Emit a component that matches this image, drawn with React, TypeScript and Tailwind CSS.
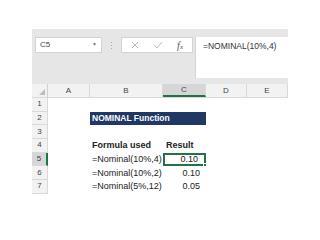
export default function App() {
  const cols = [
    { name: "A", w: "w-[42px]" },
    { name: "B", w: "w-[73px]" },
    { name: "C", w: "w-[43px]" },
    { name: "D", w: "w-[41px]" },
    { name: "E", w: "w-[41px]" },
  ];
  const rows = [
    { n: 1 },
    { n: 2, title: true },
    { n: 3 },
    { n: 4, b: "Formula used", c: "Result", bold: true },
    { n: 5, b: "=Nominal(10%,4)", c: "0.10", selected: true },
    { n: 6, b: "=Nominal(10%,2)", c: "0.10" },
    { n: 7, b: "=Nominal(5%,12)", c: "0.05" },
  ];

  return (
    <div className="w-[320px] h-[240px] bg-white pt-[29px] pl-[32px] font-['Liberation_Sans',sans-serif] text-[#222]">
      <div className="w-[256px]">
        {/* formula bar area */}
        <div className="h-[55px] bg-[#e6e6e6] flex items-start pt-[8px] pl-[3px]">
          <div className="w-[67px] h-[16px] bg-white border border-[#d4d4d4] flex items-center justify-between px-[4px] text-[8px] text-[#444]">
            <span>C5</span>
            <span className="text-[5px] text-[#777]">▼</span>
          </div>
          <div className="w-[19px] h-[16px] flex items-center justify-center">
            <div className="flex flex-col gap-[2px]">
              <span className="w-[1px] h-[1px] bg-[#aaa]" />
              <span className="w-[1px] h-[1px] bg-[#aaa]" />
              <span className="w-[1px] h-[1px] bg-[#aaa]" />
            </div>
          </div>
          <div className="w-[72px] h-[16px] bg-white border border-[#d4d4d4] flex items-center justify-between px-[9px]">
            <svg width="8" height="8" viewBox="0 0 8 8">
              <path d="M1 1 L7 7 M7 1 L1 7" stroke="#bbb" strokeWidth="1" />
            </svg>
            <svg width="10" height="8" viewBox="0 0 10 8">
              <path d="M1 4 L4 7 L9 1" stroke="#bbb" strokeWidth="1" fill="none" />
            </svg>
            <span className="font-['Liberation_Serif',serif] italic text-[10px] text-[#555]">
              f<span className="text-[7px]">x</span>
            </span>
          </div>
          <div className="ml-[2px] flex-1 h-[41px] bg-white border-l border-[#d4d4d4] pl-[7px] pt-[3px] text-[8.5px] text-[#333]">
            =NOMINAL(10%,4)
          </div>
        </div>

        {/* column headers */}
        <div className="flex h-[14px] bg-[#f2f2f2] border-b border-[#d9d9d9] text-[8px] text-[#444]">
          <div className="w-[16px] flex items-end justify-end pr-[2px] pb-[2px] border-r border-[#d0d0d0]">
            <svg width="6" height="6" viewBox="0 0 6 6">
              <path d="M6 0 L6 6 L0 6 Z" fill="#bdbdbd" />
            </svg>
          </div>
          {cols.map((c) => (
            <div
              key={c.name}
              className={`${c.w} flex items-center justify-center border-r border-[#d9d9d9] ${
                c.name === "C" ? "bg-[#d6d6d6] border-b-2 border-b-[#217346]" : ""
              }`}
            >
              {c.name}
            </div>
          ))}
        </div>

        {/* rows */}
        {rows.map((r) => (
          <div key={r.n} className="flex h-[13.7px] text-[9px]">
            <div
              className={`w-[16px] flex items-center justify-center text-[8px] text-[#444] border-b border-[#d9d9d9] ${
                r.selected ? "bg-[#d6d6d6] border-r-2 border-r-[#217346]" : "bg-[#f2f2f2] border-r border-[#d0d0d0]"
              }`}
            >
              {r.n}
            </div>
            <div className="w-[42px]" />
            {r.title ? (
              <div className="w-[116px] bg-[#1f3864] text-white text-[8.5px] font-bold flex items-center pl-[2px]">
                NOMINAL Function
              </div>
            ) : (
              <>
                <div className={`w-[73px] flex items-center pl-[2px] ${r.bold ? "font-bold" : ""}`}>{r.b}</div>
                <div
                  className={`w-[43px] flex items-center ${r.bold ? "font-bold pl-[3px]" : "justify-end pr-[6px]"} ${
                    r.selected ? "relative border-2 border-[#217346] pr-[4px]" : ""
                  }`}
                >
                  {r.c}
                  {r.selected && (
                    <span className="absolute -right-[3px] -bottom-[3px] w-[4px] h-[4px] bg-[#217346] border border-white" />
                  )}
                </div>
              </>
            )}
          </div>
        ))}
      </div>
    </div>
  );
}
